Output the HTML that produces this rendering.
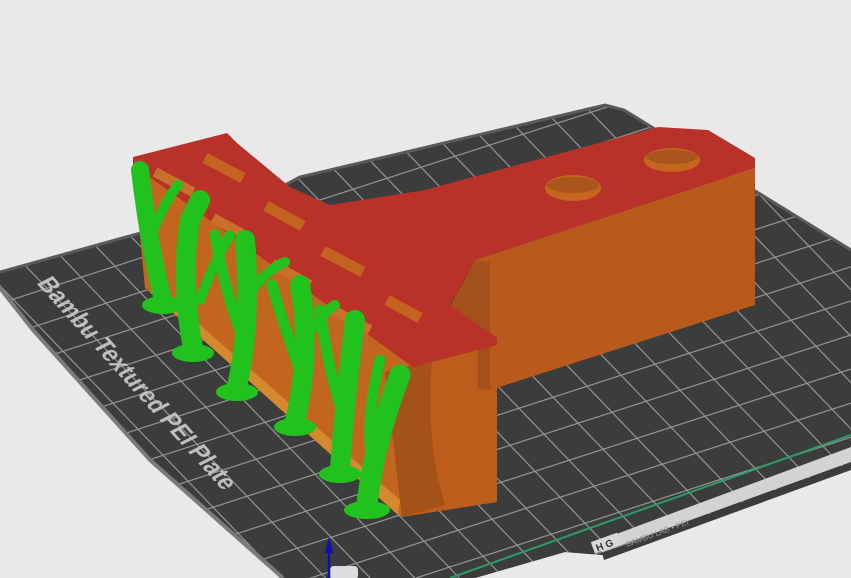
<!DOCTYPE html>
<html><head><meta charset="utf-8"><style>
html,body{margin:0;padding:0;background:#e9e9e9;}
svg{display:block;}
</style></head><body>
<svg width="851" height="578" viewBox="0 0 851 578" xmlns="http://www.w3.org/2000/svg">
<defs>
<pattern id="grid" patternUnits="userSpaceOnUse" width="100" height="100" patternTransform="matrix(0.25 0.26 0.34 -0.11 -72 258)">
<rect width="100" height="100" fill="#3b3c3c"/>
<path d="M0 0 H100 M0 0 V100" stroke="#9a9a9a" stroke-width="7" fill="none"/>
</pattern>
<clipPath id="plate"><path d="M0 272 L173 224 L285 185 L300 177 L605 105 L624 110 L851 250 L851 465 L602 555 L565 552 L475 578 L283 578 L150 460 L33 330 L0 288 Z"/></clipPath>
</defs>
<rect width="851" height="578" fill="#e9e9e9"/>
<path d="M0 272 L173 224 L285 185 L300 177 L605 105 L624 110 L851 250 L851 465 L602 555 L565 552 L475 578 L283 578 L150 460 L33 330 L0 288 Z" fill="#3b3c3c"/>
<rect width="851" height="578" fill="url(#grid)" clip-path="url(#plate)"/>
<path d="M0 272 L173 224 L285 185 L300 177 L605 105 L624 110 L851 250" fill="none" stroke="#5a5a5a" stroke-width="3"/>
<path d="M0 288 L33 330 L150 460 L283 578" fill="none" stroke="#7a7a7a" stroke-width="4"/>
<path d="M450 578 L851 435" stroke="#2e9a6a" stroke-width="2"/>
<path d="M592 543 L851 447 L851 462 L602 552 Z" fill="#d2d3d3"/>
<path d="M602 553 L851 463 L851 470 L604 560 Z" fill="#3b3c3c"/>
<rect x="592" y="537" width="28" height="12" fill="#d8d8d8" transform="rotate(-20 606 543)"/>
<text x="595" y="548" font-family="Liberation Sans, sans-serif" font-size="10" font-weight="bold" fill="#333" transform="rotate(-20 606 543)">H G</text>
<text x="625" y="542" font-family="Liberation Sans, sans-serif" font-size="8" fill="#9a9a9a" transform="rotate(-20 640 538)">BAMBU LAB • PEI</text>
<text x="0" y="0" font-family="Liberation Sans, sans-serif" font-size="25" font-weight="bold" fill="#bfbfbf" transform="translate(36 283) rotate(48) skewX(-15)" textLength="280" lengthAdjust="spacingAndGlyphs">Bambu Textured PEI Plate</text>
<path d="M133 163 L413 367 L402 517 L145 288 Z" fill="#c2651e"/>
<path d="M160 290 L400 500 L398 515 L150 292 Z" fill="#d4892e"/>
<path d="M410 360 L497 342 L497 502 L402 517 Z" fill="#bd5d1b"/>
<path d="M385 372 L432 360 Q425 440 445 505 L402 517 Z" fill="#a4511a"/>
<path d="M475 260 L755 168 L755 305 L490 390 L478 388 Z" fill="#b85a1c"/>
<path d="M475 260 L448 310 L478 337 L478 388 L490 390 L490 262 Z" fill="#a3501a"/>
<path d="M133 157 L227 133 L237 143 L290 187 L330 205 L425 190 L658 127 L708 130 L755 158 L755 168 L475 260 L450 305 L497 338 L497 345 L413 367 L133 165 Z" fill="#b9322a"/>
<g stroke="#c9702a" stroke-width="10">
<line x1="155" y1="172" x2="193" y2="192"/>
<line x1="213" y1="218" x2="250" y2="238"/>
<line x1="272" y1="264" x2="310" y2="285"/>
<line x1="333" y1="310" x2="370" y2="330"/>
</g>
<g stroke="#c4621f" stroke-width="11">
<line x1="205" y1="158" x2="243" y2="178"/>
<line x1="266" y1="206" x2="303" y2="226"/>
<line x1="323" y1="251" x2="363" y2="272"/>
<line x1="387" y1="300" x2="420" y2="318"/>
</g>
<ellipse cx="573" cy="188" rx="28" ry="13" fill="#c5661f"/>
<ellipse cx="573" cy="185" rx="26" ry="8" fill="#a9551b"/>
<ellipse cx="672" cy="160" rx="28" ry="12" fill="#c5661f"/>
<ellipse cx="672" cy="157" rx="26" ry="7" fill="#a9551b"/>
<g fill="none" stroke="#22c21e" stroke-linecap="round">
<path d="M163 300 Q148 240 140 170" stroke-width="18"/>
<path d="M150 240 Q162 205 178 185" stroke-width="10"/>
<path d="M193 348 Q180 280 190 220 L200 200" stroke-width="20"/>
<path d="M200 300 Q215 260 230 235" stroke-width="10"/>
<path d="M237 386 Q252 320 245 240" stroke-width="20"/>
<path d="M240 330 Q225 290 215 235" stroke-width="11"/>
<path d="M245 300 Q265 270 285 262" stroke-width="10"/>
<path d="M295 421 Q312 350 300 285" stroke-width="20"/>
<path d="M300 370 Q285 330 272 285" stroke-width="11"/>
<path d="M305 340 Q325 310 335 305" stroke-width="10"/>
<path d="M340 468 Q345 400 355 320" stroke-width="20"/>
<path d="M345 420 Q330 380 320 310" stroke-width="11"/>
<path d="M367 503 Q375 440 400 375" stroke-width="21"/>
<path d="M372 460 Q365 420 380 360" stroke-width="11"/>
</g>
<g fill="#22c21e">
<ellipse cx="163" cy="305" rx="21" ry="9"/>
<ellipse cx="193" cy="353" rx="21" ry="9"/>
<ellipse cx="237" cy="392" rx="21" ry="9"/>
<ellipse cx="295" cy="427" rx="21" ry="9"/>
<ellipse cx="340" cy="474" rx="21" ry="9"/>
<ellipse cx="367" cy="510" rx="23" ry="9"/>
</g>
<rect x="330" y="566" width="28" height="14" rx="4" fill="#dcdcdc"/>
<line x1="329" y1="548" x2="329" y2="578" stroke="#1010b0" stroke-width="2.5"/>
<path d="M325 553 L329 536 L333 553 Z" fill="#1010b0"/>
</svg>
</body></html>
